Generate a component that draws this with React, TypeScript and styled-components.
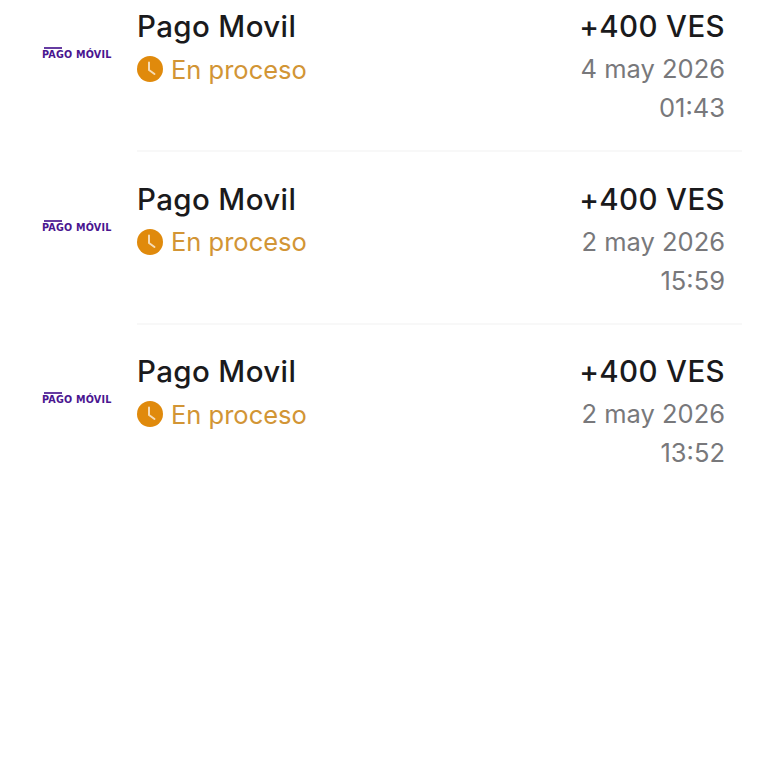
import React from "react";
import styled, { createGlobalStyle } from "styled-components";

const Global = createGlobalStyle`
  html, body { margin: 0; padding: 0; background: #fff; }
  body { font-family: Inter, "Liberation Sans", sans-serif; }
`;

const List = styled.div`
  display: flex;
  flex-direction: column;
  width: 768px;
  height: 768px;
  overflow: hidden;
  box-sizing: border-box;
  padding-top: 8px;
`;

const Row = styled.div`
  display: flex;
  height: 172.6px;
  box-sizing: border-box;
`;

const LogoCell = styled.div`
  width: 137px;
  flex: none;
  box-sizing: border-box;
  padding: 39px 0 0 42px;
`;

const Logo = styled.div`
  display: flex;
  flex-direction: column;
  align-items: flex-start;
  gap: 1px;
  width: 69px;
`;

const LogoBar = styled.div`
  width: 18px;
  height: 2px;
  margin-left: 2px;
  background: #4b1a91;
  opacity: 0.85;
`;

const LogoText = styled.div`
  font-family: "DejaVu Sans", sans-serif;
  font-weight: 700;
  font-size: 9.6px;
  line-height: 10px;
  letter-spacing: 0.2px;
  color: #4a1590;
  white-space: nowrap;
`;

const Body = styled.div<{ $divider: boolean }>`
  flex: none;
  width: 605px;
  height: 144px;
  box-sizing: border-box;
  padding-right: 17px;
  display: flex;
  justify-content: space-between;
  border-bottom: ${(p) => (p.$divider ? "2px solid #f8f8f8" : "2px solid transparent")};
`;

const Left = styled.div`
  display: flex;
  flex-direction: column;
`;

const Right = styled.div`
  display: flex;
  flex-direction: column;
  align-items: flex-end;
`;

const Title = styled.div`
  font-size: 29.5px;
  line-height: 37px;
  font-weight: 500;
  letter-spacing: 0.37px;
  color: #1a1a1c;
  white-space: nowrap;
`;

const Status = styled.div`
  display: flex;
  align-items: center;
  gap: 8px;
  height: 38px;
  margin-top: 5px;
  font-size: 25.5px;
  font-weight: 400;
  color: #d29535;
`;

const Meta = styled.div`
  font-size: 25.5px;
  line-height: 38px;
  color: #78787b;
  white-space: nowrap;
`;

const DateLine = styled(Meta)`
  margin-top: 5px;
`;

const TimeLine = styled(Meta)`
  margin-top: 1px;
`;

const ClockIcon = () => (
  <svg width="26" height="26" viewBox="0 0 26 26" aria-hidden="true">
    <circle cx="13" cy="13" r="13" fill="#e08a0c" />
    <path d="M12 6.5V14l5.5 4" fill="none" stroke="#fff" strokeWidth="2" strokeLinecap="round" strokeLinejoin="round" opacity="0.7" />
  </svg>
);

const items = [
  { date: "4 may 2026", time: "01:43" },
  { date: "2 may 2026", time: "15:59" },
  { date: "2 may 2026", time: "13:52" },
];

export default function App() {
  return (
    <>
      <Global />
      <List>
        {items.map((it, i) => (
          <Row key={i}>
            <LogoCell>
              <Logo>
                <LogoBar />
                <LogoText>PAGO MÓVIL</LogoText>
              </Logo>
            </LogoCell>
            <Body $divider={i < items.length - 1}>
              <Left>
                <Title>Pago Movil</Title>
                <Status>
                  <ClockIcon />
                  En proceso
                </Status>
              </Left>
              <Right>
                <Title>+400 VES</Title>
                <DateLine>{it.date}</DateLine>
                <TimeLine>{it.time}</TimeLine>
              </Right>
            </Body>
          </Row>
        ))}
      </List>
    </>
  );
}
